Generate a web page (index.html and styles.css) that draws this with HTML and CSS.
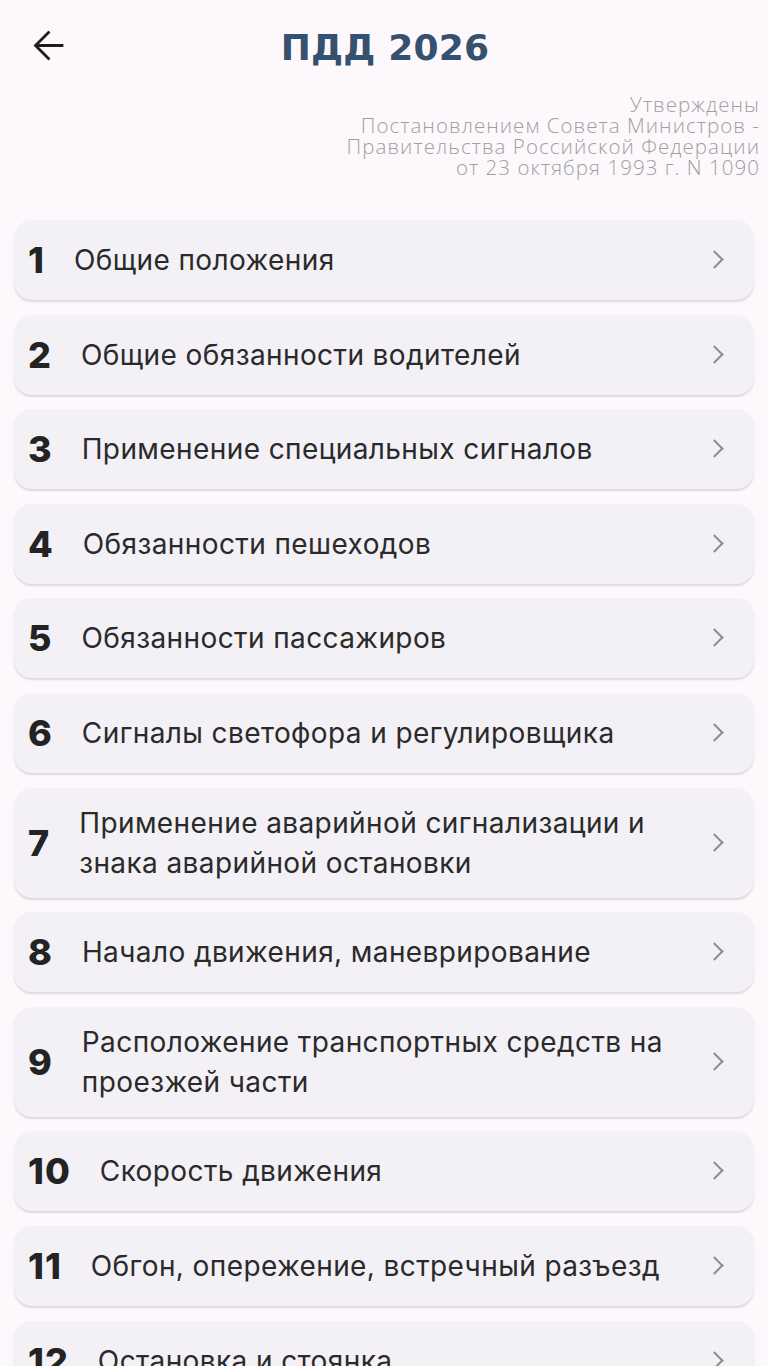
FILE: index.html
```html
<!DOCTYPE html>
<html lang="ru">
<head>
<meta charset="utf-8">
<title>ПДД 2026</title>
<link rel="stylesheet" href="styles.css">
</head>
<body>
<div class="screen">
  <header class="topbar">
    <div class="back">
      <svg width="34" height="34" viewBox="0 0 34 34" aria-hidden="true">
        <path d="M30 14.5H4M16.5 1.5L3.5 14.5L16.5 27.5" fill="none" stroke="#1c1c1c" stroke-width="2.8" stroke-linecap="square" stroke-linejoin="miter"/>
      </svg>
    </div>
    <h1 class="title">ПДД 2026</h1>
    <div></div>
  </header>
  <p class="approved">Утверждены<br>Постановлением Совета Министров -<br>Правительства Российской Федерации<br>от 23 октября 1993 г. N 1090</p>
  <ul class="list">
    <li class="card"><span class="num">1</span><span class="name">Общие положения</span><span class="chev"></span></li>
    <li class="card"><span class="num">2</span><span class="name">Общие обязанности водителей</span><span class="chev"></span></li>
    <li class="card"><span class="num">3</span><span class="name">Применение специальных сигналов</span><span class="chev"></span></li>
    <li class="card"><span class="num">4</span><span class="name">Обязанности пешеходов</span><span class="chev"></span></li>
    <li class="card"><span class="num">5</span><span class="name">Обязанности пассажиров</span><span class="chev"></span></li>
    <li class="card"><span class="num">6</span><span class="name">Сигналы светофора и регулировщика</span><span class="chev"></span></li>
    <li class="card"><span class="num">7</span><span class="name">Применение аварийной сигнализации и знака аварийной остановки</span><span class="chev"></span></li>
    <li class="card"><span class="num">8</span><span class="name">Начало движения, маневрирование</span><span class="chev"></span></li>
    <li class="card"><span class="num">9</span><span class="name">Расположение транспортных средств на проезжей части</span><span class="chev"></span></li>
    <li class="card"><span class="num">10</span><span class="name">Скорость движения</span><span class="chev"></span></li>
    <li class="card"><span class="num">11</span><span class="name">Обгон, опережение, встречный разъезд</span><span class="chev"></span></li>
    <li class="card"><span class="num">12</span><span class="name">Остановка и стоянка</span><span class="chev"></span></li>
    <li class="card"><span class="num">13</span><span class="name">Проезд перекрестков</span><span class="chev"></span></li>
  </ul>
</div>
</body>
</html>
```

FILE: styles.css
```css
* { box-sizing: border-box; }
html, body { margin: 0; padding: 0; }
body {
  background: #fcf8fc;
  font-family: Inter, "Noto Sans", sans-serif;
  color: #262626;
}
.screen {
  width: 768px;
  overflow: hidden;
}
.topbar {
  display: grid;
  grid-template-columns: 1fr auto 1fr;
  align-items: center;
  height: 60px;
  margin-top: 18px;
  padding-left: 32px;
}
.back {
  display: flex;
  align-items: center;
  width: 34px;
  height: 34px;
}
.back svg { display: block; }
.title {
  margin: 0;
  font-family: "DejaVu Sans", sans-serif;
  font-weight: bold;
  font-size: 36px;
  line-height: 1;
  color: #36506f;
  letter-spacing: 0.2px;
  padding-right: 30px;
}
.approved {
  margin: 16px 0 0;
  padding-right: 8px;
  text-align: right;
  font-family: "Open Sans", sans-serif;
  font-weight: 300;
  font-size: 20.5px;
  letter-spacing: 1.05px;
  line-height: 21px;
  color: #9f9f9f;
}
.list {
  list-style: none;
  margin: 42px 0 0;
  padding: 0 14px;
  display: flex;
  flex-direction: column;
  gap: 14.6px;
}
.card {
  display: flex;
  align-items: center;
  gap: 29px;
  min-height: 80px;
  padding: 15px 30px 15px 14px;
  background: #f3f1f5;
  border-radius: 18px;
  box-shadow: 0 2px 2px rgba(0, 0, 0, 0.13);
}
.num {
  flex: none;
  font-family: Inter, sans-serif;
  font-weight: 800;
  font-size: 36px;
  line-height: 1;
  color: #232323;
  font-variant-numeric: proportional-nums;
  letter-spacing: 1px;
}
.name {
  flex: 1;
  font-size: 28px;
  letter-spacing: 0.4px;
  line-height: 40px;
  color: #2a2a2a;
}
.chev {
  flex: none;
  width: 12px;
  height: 20px;
  position: relative;
}
.chev::before {
  content: "";
  position: absolute;
  left: -4px;
  top: 3px;
  width: 11px;
  height: 11px;
  border-right: 2.6px solid #8d8d8d;
  border-top: 2.6px solid #8d8d8d;
  transform: rotate(45deg);
}
```
